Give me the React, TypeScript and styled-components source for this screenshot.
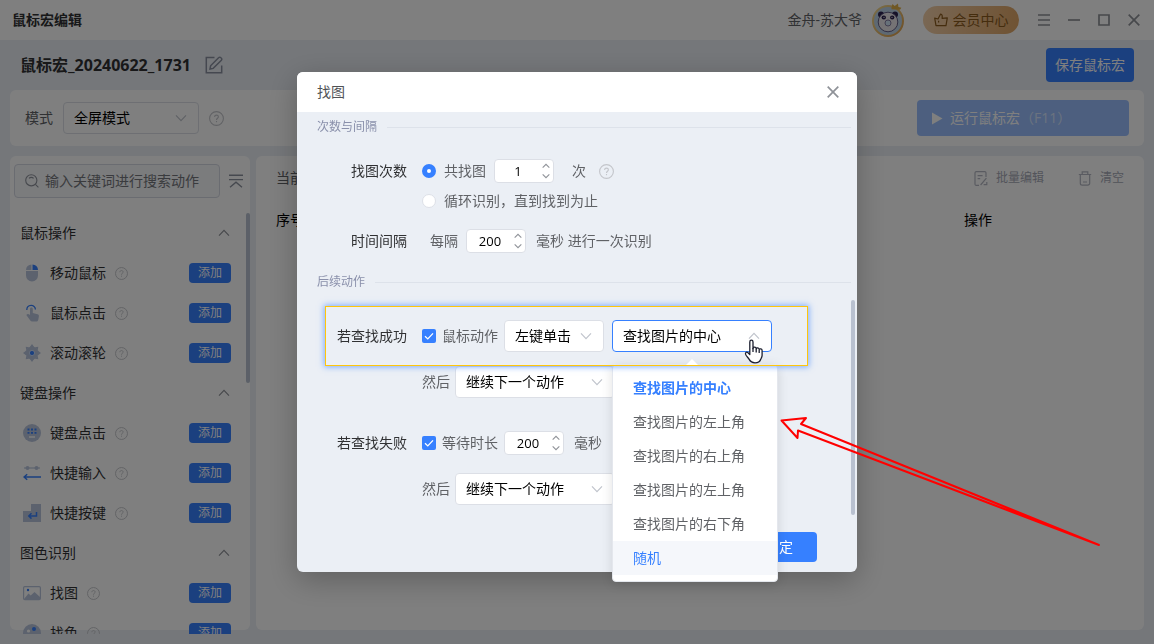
import React from "react";
import styled, { createGlobalStyle, css } from "styled-components";

const BLUE = "#3680ff";
const MIST = "#b9c5dd";

const GlobalStyle = createGlobalStyle`
  *, *::before, *::after { box-sizing: border-box; }
  body {
    margin: 0;
    background: #ebeff5;
    font: 14px/20px "Open Sans", "Noto Sans CJK SC", sans-serif;
    color: #303133;
    overflow: hidden;
  }
  button, input, select { font: inherit; color: inherit; }
  button { border: 0; padding: 0; background: none; cursor: pointer; }
  ul { list-style: none; margin: 0; padding: 0; }
  svg { display: block; flex: none; }
`;

/* ---------- Icons ---------- */

const Chevron = ({ up, size = 12, color = "#c0c4cc" }: { up?: boolean; size?: number; color?: string }) => (
  <svg width={size} height={size} viewBox="0 0 12 12" fill="none" stroke={color} strokeWidth={size < 10 ? 1.6 : 1.2}>
    <path d={up ? "M1 8.6 6 3.4l5 5.2" : "M1 3.4 6 8.6l5-5.2"} />
  </svg>
);

const Help = ({ size = 15 }: { size?: number }) => (
  <svg width={size} height={size} viewBox="0 0 15 15" fill="none" stroke="#c3c5ca" strokeWidth="1.1">
    <circle cx="7.5" cy="7.5" r="6.9" />
    <path d="M5.6 6c0-1.2.8-1.9 1.9-1.9s1.9.7 1.9 1.7c0 1.4-1.9 1.5-1.9 3.1" />
    <path d="M7.5 10v1.2" />
  </svg>
);

const Cross = () => (
  <svg width="12" height="12" viewBox="0 0 12 12" stroke="#8f9298" strokeWidth="1.7">
    <path d="m.7.7 10.6 10.6M11.3.7.7 11.3" />
  </svg>
);

const EditIcon = () => (
  <svg width="18" height="18" viewBox="0 0 18 18" fill="none" stroke="#8a90a0" strokeWidth="1.5">
    <path d="M9.5 1.4H1.3v15.3h15.4V9.5" />
    <path d="m5 13 .6-3.2 8.2-8.2a1.3 1.3 0 0 1 1.9 0l.7.7a1.3 1.3 0 0 1 0 1.9l-8.2 8.2z" />
  </svg>
);

const SearchIcon = () => (
  <svg width="14" height="14" viewBox="0 0 14 14" fill="none" stroke="#8f939c" strokeWidth="1.1">
    <circle cx="6.3" cy="6.3" r="5.6" />
    <path d="m10.4 10.4 3 3M4 4.4a3 3 0 0 1 4.6 0" />
  </svg>
);

const CollapseIcon = () => (
  <svg width="14" height="14" viewBox="0 0 14 14" fill="none" stroke="#8d939f" strokeWidth="1.4">
    <path d="M0 1.2h14M0 5.6h14M1 13.2l6-5 6 5" />
  </svg>
);

const ThumbIcon = () => (
  <svg width="14" height="14" viewBox="0 0 14 14" fill="none" stroke="#8a5a1c" strokeWidth="1.2" strokeLinejoin="round">
    <path d="M.7 5.2 4 6 6.6 1c1.500.200 1.900 1.700 1.500 4.300l5.200-.5-1.300 7.800H2z" />
    <path d="M4.600 7.800v1.600" />
  </svg>
);

const Avatar = () => (
  <svg width="34" height="36" viewBox="0 0 34 36">
    <defs>
      <linearGradient id="ring" x1="0" y1="0" x2="1" y2="1">
        <stop offset="0" stopColor="#f4dc92" />
        <stop offset="1" stopColor="#e0a04c" />
      </linearGradient>
    </defs>
    <circle cx="17" cy="19" r="15" fill="#bcd3e6" stroke="url(#ring)" strokeWidth="2" />
    <circle cx="10" cy="12.500" r="3" fill="#2d2350" />
    <circle cx="24" cy="12.500" r="3" fill="#2d2350" />
    <circle cx="17" cy="20" r="9.800" fill="#ebe6ea" stroke="#4a406e" strokeWidth="0.800" />
    <ellipse cx="12.800" cy="15.500" rx="2.200" ry="1.900" fill="#2d2350" />
    <ellipse cx="21.200" cy="15.500" rx="2.200" ry="1.900" fill="#2d2350" />
    <circle cx="13" cy="15.300" r="0.600" fill="#fff" />
    <circle cx="21" cy="15.300" r="0.600" fill="#fff" />
    <circle cx="17" cy="21" r="3" fill="#cfe3f5" stroke="#7a7298" strokeWidth="0.900" />
    <path d="m20.500 5.500 1-3.500 2.200 2L27 1.500l.4 3.600 3 .6-1.400 2-8.500-.500z" fill="#e0b048" />
  </svg>
);

const BatchIcon = () => (
  <svg width="14" height="15" viewBox="0 0 14 15" fill="none" stroke="#b4b7c2" strokeWidth="1.2">
    <path d="M12 6V1.800A1.200 1.200 0 0 0 10.800.700H2.200A1.200 1.200 0 0 0 1 1.800v11.400a1.200 1.200 0 0 0 1.200 1.100H5M3.600 4.600h5M3.600 7.600h2.600M12.400 7.200 6.600 14M9.600 13.700h3.200v-2.600" />
  </svg>
);

const TrashIcon = () => (
  <svg width="14" height="15" viewBox="0 0 14 15" fill="none" stroke="#b4b7c2" strokeWidth="1.2">
    <path d="M.8 3.500h12.400M4.200 3.500V.8h5.600v2.700M2.300 3.500v8.700a1.900 1.900 0 0 0 1.900 1.900h5.600a1.900 1.900 0 0 0 1.900-1.900V3.500M5 11h4" />
  </svg>
);

const actionIcons: Record<string, React.ReactNode> = {
  mouse: (
    <>
      <path d="M8.500 0.500A5.500 5.500 0 0 0 3 6h5.500zM3 7h12v4.500a6 6 0 0 1-12 0z" fill={MIST} />
      <path d="M9.500.500A5.500 5.500 0 0 1 15 6H9.500z" fill={BLUE} />
    </>
  ),
  click: (
    <>
      <path d="M7 5c0-2 2.800-2 2.800 0v4l4.800 1.200c1 .3 1.400 1 1.300 2l-.6 3.500c-.3 1.300-1 1.800-2.200 1.800H9.300c-1 0-1.700-.4-2.200-1.200L3.300 11c1-1.300 2.300-1.200 3.700 0z" fill={MIST} />
      <path d="M3.800 6c0-6 8.600-6 8.600-.500" fill="none" stroke={BLUE} strokeWidth="1.300" />
    </>
  ),
  wheel: (
    <>
      <path d="m9 0 2.200 3h-4.400zM9 18l-2.200-3h4.400zM0 9l3-2.200v4.400zM18 9l-3 2.200V6.800zM2.700 2.700l3.500.5-3 3zM15.300 2.700l-.5 3.500-3-3zM2.700 15.300l.5-3.500 3 3zM15.300 15.300l-3.500-.5 3-3z" fill={MIST} />
      <circle cx="9" cy="9" r="6.500" fill={MIST} />
      <circle cx="9" cy="9" r="2.600" fill={BLUE} stroke="#e3ebf9" strokeWidth="0.800" />
    </>
  ),
  keyboard: (
    <>
      <circle cx="9" cy="9" r="9" fill={MIST} />
      <path d="M4.500 5.500h2M8 5.500h2M11.500 5.500h2M4.500 8.800h2M8 8.800h2M11.500 8.800h2" stroke={BLUE} strokeWidth="1.800" />
      <path d="M6 13h6" stroke="#fff" strokeWidth="1.400" />
    </>
  ),
  input: (
    <>
      <path d="M1 4h16" stroke={MIST} strokeWidth="1.200" />
      <circle cx="4.500" cy="4" r="2" fill={MIST} />
      <circle cx="13.500" cy="4" r="2" fill={MIST} />
      <path d="M1 13h17M4.200 10.200 1 13l3.200 2.800" fill="none" stroke={BLUE} strokeWidth="1.500" />
    </>
  ),
  enter: (
    <>
      <path d="M8 0h10v18H0V7h8z" fill={MIST} />
      <path d="M13.500 8v4H6M8.500 9.300 5.800 12l2.700 2.600" fill="none" stroke={BLUE} strokeWidth="1.500" />
    </>
  ),
  image: (
    <>
      <rect x="0.600" y="2.600" width="16.800" height="13" rx="1.200" fill="none" stroke={MIST} strokeWidth="1.200" />
      <path d="m1 15 4.500-5.500 2.200 2L11.500 8l5.500 5v2.500H1z" fill={MIST} />
      <circle cx="5" cy="6" r="1.200" fill={BLUE} />
    </>
  ),
  palette: (
    <>
      <circle cx="9" cy="9" r="9" fill={MIST} />
      <circle cx="11" cy="5" r="2" fill={BLUE} />
      <circle cx="5.500" cy="7" r="1.600" fill="#fff" />
    </>
  ),
};

/* ---------- Shared controls ---------- */

const SelectWrap = styled.div<{ $width: number; $open?: boolean }>`
  position: relative;
  display: flex;
  align-items: center;
  flex: none;
  width: ${(p) => p.$width}px;
  height: 32px;
  padding-right: 11px;
  background: #fff;
  border: 1px solid ${(p) => (p.$open ? BLUE : "#dcdfe6")};
  border-radius: 4px;
  color: #000;
`;

const NativeSelect = styled.select`
  appearance: none;
  flex: 1;
  min-width: 0;
  height: 100%;
  padding: 0 0 0 10px;
  border: 0;
  outline: 0;
  background: transparent;
`;

type SelectProps = { label: string; value: string; width: number; open?: boolean; children?: React.ReactNode };

const Select = ({ label, value, width, open, children }: SelectProps) => (
  <SelectWrap $width={width} $open={open}>
    <NativeSelect aria-label={label}>
      <option>{value}</option>
    </NativeSelect>
    <Chevron up={open} />
    {children}
  </SelectWrap>
);

const NumberWrap = styled.div`
  display: flex;
  flex: none;
  width: 60px;
  height: 24px;
  background: #fff;
  border: 1px solid #dcdfe6;
  border-radius: 4px;
  color: #000;
`;

const NumberInput = styled.input`
  flex: 1;
  min-width: 0;
  padding: 0 0 0 2px;
  border: 0;
  outline: 0;
  background: transparent;
  text-align: center;
  font-size: 13px;
`;

const Stepper = styled.div`
  display: flex;
  flex-direction: column;
  align-items: center;
  justify-content: space-between;
  width: 14px;
  padding: 2px 0;
`;

const NumberField = ({ label, value }: { label: string; value: string }) => (
  <NumberWrap>
    <NumberInput aria-label={label} inputMode="numeric" defaultValue={value} />
    <Stepper>
      <button aria-label="增加"><Chevron up size={8} color="#8f9298" /></button>
      <button aria-label="减少"><Chevron size={8} color="#8f9298" /></button>
    </Stepper>
  </NumberWrap>
);

const PrimaryButton = styled.button`
  background: ${BLUE};
  color: #fff;
  border-radius: 4px;
`;

/* ---------- Editor window ---------- */

const Page = styled.div`
  display: flex;
  flex-direction: column;
  height: 100vh;
  padding-bottom: 14px;
`;

const TitleBar = styled.header`
  display: flex;
  align-items: center;
  height: 40px;
  padding: 0 5px 0 12px;
  background: #fff;
`;

const AppTitle = styled.div`
  flex: 1;
  font-weight: 600;
`;

const UserName = styled.span`
  color: #606266;
  margin-right: 9px;
`;

const VipButton = styled.button`
  display: flex;
  align-items: center;
  justify-content: center;
  gap: 5px;
  width: 96px;
  height: 28px;
  margin: 0 10px 0 18px;
  border-radius: 14px;
  background: linear-gradient(100deg, #f3d0aa, #dfa565);
  color: #8a5a1c;
`;

const WindowButton = styled.button`
  display: flex;
  align-items: center;
  justify-content: center;
  width: 30px;
  height: 40px;
`;

const NameBar = styled.div`
  display: flex;
  align-items: center;
  gap: 14px;
  height: 50px;
  padding: 0 20px;
`;

const MacroName = styled.h1`
  margin: 0;
  font-size: 16px;
  font-weight: 700;
`;

const SaveButton = styled(PrimaryButton)`
  width: 88px;
  height: 34px;
  margin-left: auto;
`;

const panel = css`
  background: #fff;
  border-radius: 6px;
`;

const ModeBar = styled.section`
  ${panel}
  display: flex;
  align-items: center;
  gap: 10px;
  flex: none;
  height: 56px;
  margin: 0 10px 10px;
  padding: 0 15px;
  color: #606266;
`;

const RunButton = styled(PrimaryButton)`
  display: flex;
  align-items: center;
  width: 212px;
  height: 36px;
  margin-left: auto;
  padding-left: 15px;
  background: #9abfff;

  svg { margin-right: 7px; }
`;

const Shortcut = styled.span`
  opacity: 0.6;
`;

const Columns = styled.div`
  display: flex;
  flex: 1;
  gap: 6px;
  min-height: 0;
  padding: 0 10px;
`;

const Sidebar = styled.aside`
  ${panel}
  display: flex;
  flex-direction: column;
  flex: none;
  width: 240px;
  padding-top: 8px;
`;

const SearchRow = styled.div`
  display: flex;
  align-items: center;
  gap: 9px;
  padding: 0 4px;
  margin-bottom: 15px;
`;

const SearchBox = styled.label`
  display: flex;
  align-items: center;
  gap: 6px;
  width: 206px;
  height: 34px;
  padding-left: 10px;
  background: #f6f8fb;
  border: 1px solid #d4d8e2;
  border-radius: 4px;
`;

const SearchInput = styled.input`
  flex: 1;
  min-width: 0;
  padding: 0;
  border: 0;
  outline: 0;
  background: transparent;

  &::placeholder { color: #75777c; opacity: 1; }
`;

const ListArea = styled.div`
  display: flex;
  flex: 1;
  min-height: 0;
  margin-bottom: -4px;
  overflow: hidden;
`;

const GroupList = styled.div`
  flex: 1;
`;

const Thumb = styled.div<{ $height: number }>`
  flex: none;
  width: 4px;
  height: ${(p) => p.$height}px;
  border-radius: 2px;
  background: #b9c1d0;
`;

const GroupHeading = styled.button`
  display: flex;
  align-items: center;
  justify-content: space-between;
  width: 100%;
  height: 40px;
  padding: 0 16px 0 10px;
`;

const ActionRow = styled.li`
  display: flex;
  align-items: center;
  gap: 9px;
  height: 40px;
  padding: 0 15px 0 13px;
`;

const AddButton = styled(PrimaryButton)`
  width: 42px;
  height: 20px;
  margin-left: auto;
  font-size: 12px;
  line-height: 20px;
`;

const Main = styled.main`
  ${panel}
  flex: 1;
  min-width: 0;
`;

const MainTools = styled.div`
  display: flex;
  align-items: center;
  height: 44px;
  padding: 0 20px;
  color: #606266;
`;

const ToolButton = styled.button`
  display: flex;
  align-items: center;
  gap: 8px;
  margin-left: 34px;
  font-size: 12px;
  color: #a6a9b6;

  &:first-of-type { margin-left: auto; }
`;

const ActionTable = styled.table`
  width: 100%;
  table-layout: fixed;
  border-collapse: collapse;
  color: #000;

  th {
    height: 40px;
    padding: 0 0 0 20px;
    font-weight: 400;
    text-align: left;
  }
  th:last-child { width: 200px; }
`;

/* ---------- Dialog ---------- */

const Overlay = styled.div`
  position: fixed;
  inset: 0;
  display: flex;
  align-items: center;
  justify-content: center;
  background: rgba(0, 0, 0, 0.5);
`;

const Dialog = styled.section`
  position: relative;
  width: 560px;
  border-radius: 6px;
  background: #ebeff5;
  box-shadow: 0 8px 30px rgba(0, 0, 0, 0.25);
`;

const DialogHeader = styled.header`
  display: flex;
  align-items: center;
  justify-content: space-between;
  height: 40px;
  padding: 0 18px 0 20px;
  background: #fff;
  border-radius: 6px 6px 0 0;
  color: #505256;
`;

const DialogBody = styled.div`
  padding-top: 6px;
`;

const SectionTitle = styled.h2`
  display: flex;
  align-items: center;
  gap: 10px;
  margin: 0 6px 0 20px;
  font-size: 12px;
  font-weight: 400;
  line-height: 18px;
  color: #8a90ab;

  &::after {
    content: "";
    flex: 1;
    height: 1px;
    background: #dde2ea;
  }
`;

const CountRows = styled.div`
  padding: 20px 0 17px;
`;

const FormRow = styled.div<{ $height?: number; $top?: number }>`
  display: flex;
  align-items: center;
  height: ${(p) => p.$height ?? 32}px;
  margin-top: ${(p) => p.$top ?? 0}px;
  padding-left: 20px;
  color: #606266;
`;

const RowLabel = styled.span`
  width: 90px;
  margin-right: 15px;
  text-align: right;
  color: #303133;
`;

const Unit = styled.span<{ $before?: number; $after?: number }>`
  margin: 0 ${(p) => p.$after ?? 0}px 0 ${(p) => p.$before ?? 0}px;
`;

const Choice = styled.label<{ $gap: number; $after?: number }>`
  display: flex;
  align-items: center;
  gap: ${(p) => p.$gap}px;
  margin-right: ${(p) => p.$after ?? 0}px;
`;

const Radio = styled.input`
  appearance: none;
  width: 14px;
  height: 14px;
  margin: 0;
  border: 1px solid #dcdfe6;
  border-radius: 50%;
  background: #fff;

  &:checked { border: 5px solid ${BLUE}; }
`;

const CheckBoxWrap = styled.span`
  display: grid;
  width: 14px;
  height: 14px;

  > * { grid-area: 1 / 1; }
  svg { pointer-events: none; }
`;

const CheckInput = styled.input`
  appearance: none;
  width: 14px;
  height: 14px;
  margin: 0;
  border-radius: 2px;
  background: ${BLUE};
`;

const CheckBox = () => (
  <CheckBoxWrap>
    <CheckInput type="checkbox" defaultChecked />
    <svg width="14" height="14" viewBox="0 0 14 14" fill="none" stroke="#fff" strokeWidth="1.300">
      <path d="m3 7.200 2.800 2.700L11 4.400" />
    </svg>
  </CheckBoxWrap>
);

const ScrollArea = styled.div`
  display: flex;
  height: 215px;
  margin-top: 9px;
  padding-right: 2px;
`;

const ScrollContent = styled.div`
  flex: 1;
  padding-top: 6px;
`;

const HighlightRow = styled(FormRow)`
  position: relative;
  z-index: 1;

  &::after {
    content: "";
    position: absolute;
    z-index: 3;
    inset: 0 43px 0 28px;
    border: 1px solid #ffc60a;
    box-shadow: 0 0 6px 1px rgba(54, 128, 255, 0.6);
    pointer-events: none;
  }
`;

const Menu = styled.ul`
  position: absolute;
  z-index: 2;
  top: 43px;
  left: -1px;
  width: 166px;
  padding: 6px 0;
  background: #fff;
  border: 1px solid #e4e7ed;
  border-radius: 4px;
  box-shadow: 0 2px 12px rgba(0, 0, 0, 0.12);

  &::before {
    content: "";
    position: absolute;
    top: -6px;
    left: 73px;
    border: 6px solid transparent;
    border-top: 0;
    border-bottom-color: #fff;
  }
`;

const MenuItem = styled.li<{ $selected?: boolean; $hover?: boolean }>`
  height: 34px;
  padding: 0 20px;
  line-height: 34px;
  white-space: nowrap;
  color: ${(p) => (p.$selected || p.$hover ? BLUE : "#606266")};
  font-weight: ${(p) => (p.$selected ? 700 : 400)};
  background: ${(p) => (p.$hover ? "#f5f7fb" : "transparent")};
`;

const Footer = styled.footer`
  display: flex;
  justify-content: flex-end;
  padding: 17px 40px 10px;
`;

const ConfirmButton = styled(PrimaryButton)`
  width: 76px;
  height: 30px;
`;

const Pointer = styled.svg`
  position: absolute;
  z-index: 5;
  left: 447px;
  top: 267px;
`;

const Arrow = styled.svg`
  position: absolute;
  z-index: 5;
  left: 480px;
  top: 340px;
  pointer-events: none;
`;

/* ---------- Data ---------- */

const groups = [
  {
    title: "鼠标操作",
    items: [
      { name: "移动鼠标", icon: "mouse" },
      { name: "鼠标点击", icon: "click" },
      { name: "滚动滚轮", icon: "wheel" },
    ],
  },
  {
    title: "键盘操作",
    items: [
      { name: "键盘点击", icon: "keyboard" },
      { name: "快捷输入", icon: "input" },
      { name: "快捷按键", icon: "enter" },
    ],
  },
  {
    title: "图色识别",
    items: [
      { name: "找图", icon: "image" },
      { name: "找色", icon: "palette" },
    ],
  },
];

const positions = [
  "查找图片的中心",
  "查找图片的左上角",
  "查找图片的右上角",
  "查找图片的左上角",
  "查找图片的右下角",
  "随机",
];

const windowStroke = { fill: "none", stroke: "#8f9298", strokeWidth: 1.7 };

const Editor = () => (
  <Page>
    <TitleBar>
      <AppTitle>鼠标宏编辑</AppTitle>
      <UserName>金舟-苏大爷</UserName>
      <Avatar />
      <VipButton><ThumbIcon />会员中心</VipButton>
      <WindowButton aria-label="菜单">
        <svg width="12" height="12" viewBox="0 0 12 12" {...windowStroke}><path d="M0 1h12M0 6h12M0 11h12" /></svg>
      </WindowButton>
      <WindowButton aria-label="最小化">
        <svg width="12" height="12" viewBox="0 0 12 12" {...windowStroke}><path d="M0 6h12" /></svg>
      </WindowButton>
      <WindowButton aria-label="最大化">
        <svg width="12" height="12" viewBox="0 0 12 12" {...windowStroke}><path d="M1 1h10v10H1z" /></svg>
      </WindowButton>
      <WindowButton aria-label="关闭"><Cross /></WindowButton>
    </TitleBar>

    <NameBar>
      <MacroName>鼠标宏_20240622_1731</MacroName>
      <button aria-label="重命名"><EditIcon /></button>
      <SaveButton>保存鼠标宏</SaveButton>
    </NameBar>

    <ModeBar>
      模式
      <Select label="模式" value="全屏模式" width={136} />
      <Help />
      <RunButton>
        <svg width="11" height="13" viewBox="0 0 11 13" fill="#fff"><path d="M0 0.500 10.500 6.500 0 12.500z" /></svg>
        运行鼠标宏<Shortcut>（F11）</Shortcut>
      </RunButton>
    </ModeBar>

    <Columns>
      <Sidebar>
        <SearchRow>
          <SearchBox>
            <SearchIcon />
            <SearchInput aria-label="搜索动作" placeholder="输入关键词进行搜索动作" />
          </SearchBox>
          <button aria-label="全部收起"><CollapseIcon /></button>
        </SearchRow>
        <ListArea>
          <GroupList>
            {groups.map((group) => (
              <div key={group.title}>
                <GroupHeading>
                  {group.title}
                  <Chevron up color="#8f9298" />
                </GroupHeading>
                <ul>
                  {group.items.map((item) => (
                    <ActionRow key={item.name}>
                      <svg width="18" height="18" viewBox="0 0 18 18">{actionIcons[item.icon]}</svg>
                      {item.name}
                      <Help size={13} />
                      <AddButton>添加</AddButton>
                    </ActionRow>
                  ))}
                </ul>
              </div>
            ))}
          </GroupList>
          <Thumb $height={170} />
        </ListArea>
      </Sidebar>

      <Main>
        <MainTools>
          当前动作
          <ToolButton><BatchIcon />批量编辑</ToolButton>
          <ToolButton><TrashIcon />清空</ToolButton>
        </MainTools>
        <ActionTable>
          <thead>
            <tr><th>序号</th><th>操作</th></tr>
          </thead>
        </ActionTable>
      </Main>
    </Columns>
  </Page>
);

const FindImageDialog = () => (
  <Overlay>
    <Dialog role="dialog" aria-label="找图">
      <DialogHeader>
        找图
        <button aria-label="关闭"><Cross /></button>
      </DialogHeader>
      <DialogBody>
        <SectionTitle>次数与间隔</SectionTitle>
        <CountRows>
          <FormRow $height={30}>
            <RowLabel>找图次数</RowLabel>
            <Choice $gap={8} $after={8}>
              <Radio type="radio" name="times" defaultChecked />共找图
            </Choice>
            <NumberField label="找图次数" value="1" />
            <Unit $before={18} $after={13}>次</Unit>
            <Help />
          </FormRow>
          <FormRow $height={30}>
            <RowLabel />
            <Choice $gap={8}>
              <Radio type="radio" name="times" />循环识别，直到找到为止
            </Choice>
          </FormRow>
          <FormRow $height={30} $top={10}>
            <RowLabel>时间间隔</RowLabel>
            <Unit $before={8} $after={8}>每隔</Unit>
            <NumberField label="时间间隔" value="200" />
            <Unit $before={10}>毫秒 进行一次识别</Unit>
          </FormRow>
        </CountRows>

        <SectionTitle>后续动作</SectionTitle>
        <ScrollArea>
          <ScrollContent>
            <HighlightRow $height={60}>
              <RowLabel>若查找成功</RowLabel>
              <Choice $gap={6} $after={6}><CheckBox />鼠标动作</Choice>
              <Select label="鼠标动作" value="左键单击" width={100} />
              <Unit $before={8} />
              <Select label="点击位置" value="查找图片的中心" width={160} open>
                <Menu role="listbox" aria-label="点击位置">
                  {positions.map((text, i) => (
                    <MenuItem key={i} role="option" aria-selected={i === 0} $selected={i === 0} $hover={i === 5}>
                      {text}
                    </MenuItem>
                  ))}
                </Menu>
              </Select>
            </HighlightRow>
            <FormRow>
              <RowLabel />
              <Unit $after={5}>然后</Unit>
              <Select label="成功后" value="继续下一个动作" width={160} />
            </FormRow>
            <FormRow $top={29}>
              <RowLabel>若查找失败</RowLabel>
              <Choice $gap={6} $after={6}><CheckBox />等待时长</Choice>
              <NumberField label="等待时长" value="200" />
              <Unit $before={10}>毫秒</Unit>
            </FormRow>
            <FormRow $top={14}>
              <RowLabel />
              <Unit $after={5}>然后</Unit>
              <Select label="失败后" value="继续下一个动作" width={160} />
            </FormRow>
          </ScrollContent>
          <Thumb $height={215} />
        </ScrollArea>
        <Footer>
          <ConfirmButton>确定</ConfirmButton>
        </Footer>
      </DialogBody>

      <Pointer width="20" height="26" viewBox="0 0 20 26" fill="#fff" stroke="#1d2030" strokeWidth="1.300" strokeLinejoin="round">
        <path d="M5.800 15.500V3c0-2.400 3.200-2.400 3.200 0v6.500c.3-1.800 3-1.700 3.200.3.500-1.400 2.800-1.200 3 .6.700-1 2.900-.8 2.900 1.200v4.900c0 1.600-1.300 3.200-1.600 4.300-.6 2-2 3-5.500 3-3.800 0-4.700-1.400-5.800-3.400C4.300 18.700 1.800 16.800 1.500 15c-.3-1.700 1.300-2.400 2.500-1.300z" />
        <path d="M9 9v4M12.200 10v3.500M15.200 11v3" fill="none" />
      </Pointer>
      <Arrow width="330" height="140" viewBox="0 0 330 140" fill="none" stroke="#ff0000" strokeWidth="2" strokeLinejoin="round">
        <path d="M322 133 24 12l5-6L4.500 8.500l16 17.500.5-7.500z" />
      </Arrow>
    </Dialog>
  </Overlay>
);

export default function App() {
  return (
    <>
      <GlobalStyle />
      <Editor />
      <FindImageDialog />
    </>
  );
}
